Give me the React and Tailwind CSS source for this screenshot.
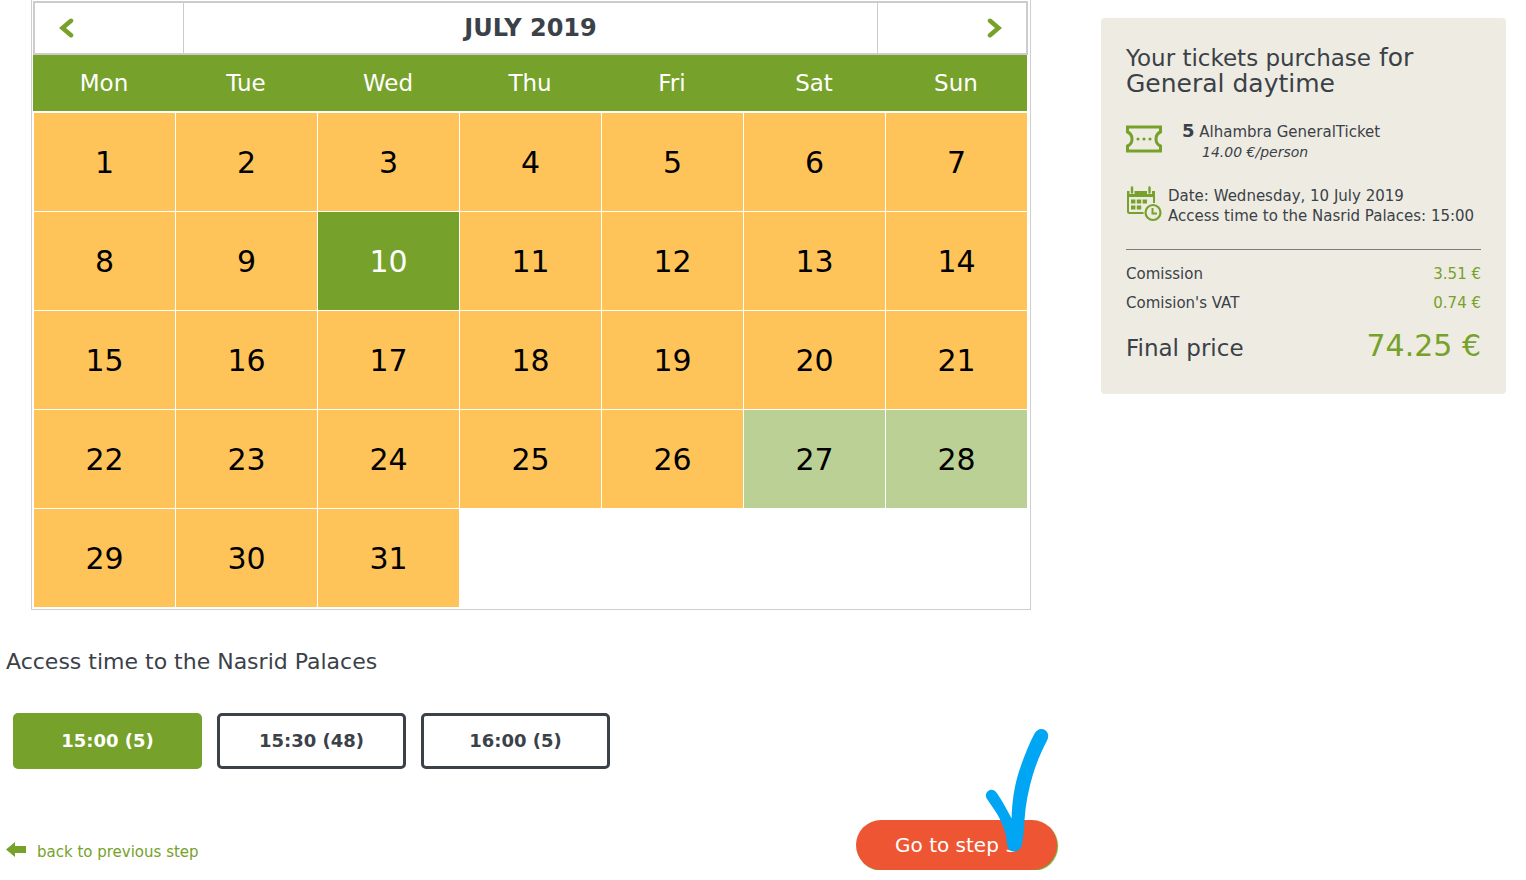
import { useState } from 'react';

const WEEK_DAYS = ['Mon', 'Tue', 'Wed', 'Thu', 'Fri', 'Sat', 'Sun'];

const WEEKS = [
  [1, 2, 3, 4, 5, 6, 7],
  [8, 9, 10, 11, 12, 13, 14],
  [15, 16, 17, 18, 19, 20, 21],
  [22, 23, 24, 25, 26, 27, 28],
  [29, 30, 31, null, null, null, null],
];

const AVAILABLE_DAYS = [27, 28];

const SLOTS = [
  { time: '15:00', left: 5 },
  { time: '15:30', left: 48 },
  { time: '16:00', left: 5 },
];

const TicketIcon = () => (
  <svg width="36" height="28" viewBox="0 0 36 28" fill="none" aria-hidden="true">
    <path
      d="M1.5 2H34.5V7C28.5 9.500 28.5 18.500 34.5 21V26H1.5V21C7.500 18.500 7.500 9.500 1.5 7Z"
      stroke="#76a12a"
      strokeWidth="3"
    />
    <g fill="#76a12a">
      <circle cx="12" cy="14" r="1.6" />
      <circle cx="18" cy="14" r="1.6" />
      <circle cx="24" cy="14" r="1.6" />
    </g>
  </svg>
);

const DateIcon = () => (
  <svg width="36" height="36" viewBox="0 0 36 36" aria-hidden="true">
    <path d="M1 5h28v6H1z" fill="#76a12a" />
    <path d="M2 10v15.5q0 1.500 1.500 1.500H18M28 10v7" fill="none" stroke="#76a12a" strokeWidth="2" />
    <path d="M6 3v5M23.500 3v5" stroke="#eeece2" strokeWidth="5" />
    <path d="M6 1.500v5M23.500 1.500v5" stroke="#76a12a" strokeWidth="2.400" strokeLinecap="round" />
    <path
      d="M5 13.500h4.400v4H5zM10.800 13.500h4.400v4h-4.400zM16.600 13.500H21v4h-4.400zM5 19.500h4.400v4H5zM10.800 19.500h4.400v4h-4.400z"
      fill="#76a12a"
    />
    <circle cx="27" cy="26.500" r="9.500" fill="#eeece2" />
    <circle cx="27" cy="26.500" r="7.500" fill="none" stroke="#76a12a" strokeWidth="2.200" />
    <path d="M26.500 22v5.500H31" fill="none" stroke="#76a12a" strokeWidth="2" />
  </svg>
);

const Chevron = ({ right }) => (
  <svg width="15" height="20" viewBox="0 0 15 20" fill="none" aria-hidden="true">
    <path
      d={right ? 'M3 2.800L11.500 10L3 17.200' : 'M12 2.800L3.500 10L12 17.200'}
      stroke="#76a12a"
      strokeWidth="4.500"
      strokeLinecap="round"
    />
  </svg>
);

const BackArrow = () => (
  <svg width="20" height="15" viewBox="0 0 20 15" aria-hidden="true">
    <path d="M0 7.500L9 0v4h11v7H9v4z" fill="#76a12a" />
  </svg>
);

// Hand-drawn tick over the corner of the submit button
const Tick = () => (
  <svg
    className="pointer-events-none absolute -top-[92px] left-32"
    width="68"
    height="126"
    viewBox="0 0 68 126"
    fill="#00a6f4"
    aria-hidden="true"
  >
    <path d="M50.300 6C53 0.500 58 0 61 2C64.500 4.500 65 8 63.300 12C57 24 52 36 48.500 48C44.500 62 41.500 76 40.500 92C40 101 39.500 109 38 116C37 121 34 123.500 29.500 123.500C25.500 123.500 24 120.500 23.200 117C22.300 112 22.500 109 21.300 105C19.500 99 17 93 14 87.500C10.500 81 6 76 2.700 70.500C-0.500 64 7.500 58.500 12 64C17 70.500 22 80 27.600 90.500C28 73 30.500 58 34.500 45C39 31 44.500 17 50.300 6Z" />
  </svg>
);

const getDayStyle = (day, selected) => {
  if (!day) return 'bg-white';
  if (day === selected) return 'bg-[#76a12a] text-white';
  if (AVAILABLE_DAYS.includes(day)) return 'bg-[#bad094] text-black';
  return 'bg-[#ffc459] text-black';
};

const Calendar = ({ selected, onSelect }) => (
  <section className="ml-[31px] mr-[26px] border border-t-0 border-[#cfcfcf] pt-px pb-px pl-px pr-0.5">
    <div className="flex h-[54px] border-2 border-[#cccccc]">
      <div className="flex w-[149px] items-center border-r border-[#cccccc] pl-6">
        <button type="button" aria-label="Previous month">
          <Chevron />
        </button>
      </div>
      <h2 className="flex flex-1 items-center justify-center text-2xl font-bold">JULY 2019</h2>
      <div className="flex w-[149px] items-center justify-end border-l border-[#cccccc] pr-6">
        <button type="button" aria-label="Next month">
          <Chevron right />
        </button>
      </div>
    </div>
    <div className="pr-px">
      <table className="w-full table-fixed border-separate border-spacing-0">
        <thead>
          <tr>
            {WEEK_DAYS.map((day) => (
              <th
                key={day}
                className="h-[58px] border-b-2 border-white bg-[#76a12a] p-0 text-[23px] font-normal text-white"
              >
                {day}
              </th>
            ))}
          </tr>
        </thead>
        <tbody>
          {WEEKS.map((week, i) => (
            <tr key={i}>
              {week.map((day, j) => (
                <td
                  key={j}
                  className={`h-[99px] border-b border-l border-white p-0 text-[30px] ${getDayStyle(day, selected)}`}
                >
                  {day && (
                    <button type="button" onClick={() => onSelect(day)} className="h-[98px] w-full">
                      {day}
                    </button>
                  )}
                </td>
              ))}
            </tr>
          ))}
        </tbody>
      </table>
    </div>
  </section>
);

const Summary = ({ day, time }) => (
  <aside className="mt-[18px] w-[405px] shrink-0 self-start rounded-sm bg-[#eeece2] px-[25px] pt-[27px] pb-6 text-[15px] leading-5">
    <h2 className="text-[25px] leading-[26px]">
      <span className="block">
        <span className="text-[23px]">Your tickets purchase</span> for
      </span>
      <span className="block">General daytime</span>
    </h2>

    <div className="mt-6 flex gap-5">
      <div className="pt-1">
        <TicketIcon />
      </div>
      <div>
        <p>
          <strong className="text-lg leading-5">5</strong> Alhambra GeneralTicket
        </p>
        <p className="pl-5 text-sm leading-5 italic">14.00 €/person</p>
      </div>
    </div>

    <div className="mt-6 flex gap-1.5">
      <DateIcon />
      <div className="whitespace-nowrap">
        <p>Date: Wednesday, {day} July 2019</p>
        <p>Access time to the Nasrid Palaces: {time}</p>
      </div>
    </div>

    <dl className="mt-[23px] border-t border-[#7c7c78] pt-2.5">
      <div className="flex justify-between leading-[29px]">
        <dt>Comission</dt>
        <dd className="text-[#76a12a]">3.51 €</dd>
      </div>
      <div className="flex justify-between leading-[29px]">
        <dt>Comision's VAT</dt>
        <dd className="text-[#76a12a]">0.74 €</dd>
      </div>
      <div className="mt-1.5 flex items-baseline justify-between leading-[44px]">
        <dt className="text-[23px]">Final price</dt>
        <dd className="text-[30px] text-[#76a12a]">74.25 €</dd>
      </div>
    </dl>
  </aside>
);

const App = () => {
  const [day, setDay] = useState(10);
  const [time, setTime] = useState('15:00');

  return (
    <div className="flex gap-11 bg-white pr-5 font-['Verdana','DejaVu_Sans',sans-serif] text-[#3b4148]">
      <main className="min-w-0 flex-1">
        <Calendar selected={day} onSelect={setDay} />

        <h3 className="mt-9 pl-1.5 text-[22px] leading-8">Access time to the Nasrid Palaces</h3>
        <div className="mt-[35px] flex gap-[15px] pl-[13px]">
          {SLOTS.map((slot) => (
            <button
              key={slot.time}
              type="button"
              onClick={() => setTime(slot.time)}
              className={`h-14 w-[189px] rounded-[5px] border-3 text-lg font-bold ${
                slot.time === time
                  ? 'border-[#76a12a] bg-[#76a12a] text-white'
                  : 'border-[#3b4148] bg-white'
              }`}
            >
              {slot.time} ({slot.left})
            </button>
          ))}
        </div>

        <div className="mt-[51px] flex items-start justify-between pl-1.5">
          <a href="#back" className="mt-[22px] flex gap-[11px] text-[15px] leading-5 text-[#76a12a]">
            <BackArrow />
            back to previous step
          </a>
          <div className="relative">
            <button
              type="button"
              className="h-[50px] w-[201px] rounded-full bg-[#ed5533] text-xl text-white shadow-[1px_1px_1px_#76a12a]"
            >
              Go to step 3
            </button>
            <Tick />
          </div>
        </div>
      </main>

      <Summary day={day} time={time} />
    </div>
  );
};

export default App;
